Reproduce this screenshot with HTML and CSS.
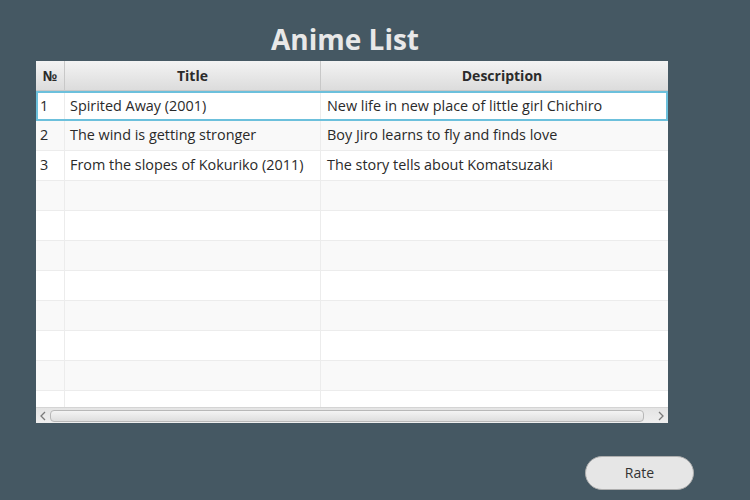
FILE: index.html
```html
<!DOCTYPE html>
<html>
<head>
<meta charset="utf-8">
<link rel="stylesheet" href="styles.css">
</head>
<body>
<div class="page">
  <h1 class="title">Anime List</h1>
  <div class="table">
    <div class="row head">
      <div class="cell c-no">№</div>
      <div class="cell c-title">Title</div>
      <div class="cell c-desc">Description</div>
    </div>
    <div class="body">
      <div class="row selected">
        <div class="cell c-no">1</div>
        <div class="cell c-title">Spirited Away (2001)</div>
        <div class="cell c-desc">New life in new place of little girl Chichiro</div>
      </div>
      <div class="row odd">
        <div class="cell c-no">2</div>
        <div class="cell c-title">The wind is getting stronger</div>
        <div class="cell c-desc">Boy Jiro learns to fly and finds love</div>
      </div>
      <div class="row">
        <div class="cell c-no">3</div>
        <div class="cell c-title">From the slopes of Kokuriko (2011)</div>
        <div class="cell c-desc">The story tells about Komatsuzaki</div>
      </div>
      <div class="row odd"><div class="cell c-no"></div><div class="cell c-title"></div><div class="cell c-desc"></div></div>
      <div class="row"><div class="cell c-no"></div><div class="cell c-title"></div><div class="cell c-desc"></div></div>
      <div class="row odd"><div class="cell c-no"></div><div class="cell c-title"></div><div class="cell c-desc"></div></div>
      <div class="row"><div class="cell c-no"></div><div class="cell c-title"></div><div class="cell c-desc"></div></div>
      <div class="row odd"><div class="cell c-no"></div><div class="cell c-title"></div><div class="cell c-desc"></div></div>
      <div class="row"><div class="cell c-no"></div><div class="cell c-title"></div><div class="cell c-desc"></div></div>
      <div class="row odd"><div class="cell c-no"></div><div class="cell c-title"></div><div class="cell c-desc"></div></div>
      <div class="row"><div class="cell c-no"></div><div class="cell c-title"></div><div class="cell c-desc"></div></div>
    </div>
    <div class="scrollbar">
      <div class="arrow">
        <svg width="8" height="10" viewBox="0 0 8 10"><path d="M6 1 L2 5 L6 9" fill="none" stroke="#7a7a7a" stroke-width="1.3"/></svg>
      </div>
      <div class="track"><div class="thumb"></div></div>
      <div class="arrow">
        <svg width="8" height="10" viewBox="0 0 8 10"><path d="M2 1 L6 5 L2 9" fill="none" stroke="#7a7a7a" stroke-width="1.3"/></svg>
      </div>
    </div>
  </div>
  <div class="actions">
    <button class="btn">Rate</button>
  </div>
</div>
</body>
</html>
```
FILE: styles.css
```css
html, body {
  margin: 0;
  padding: 0;
  background: #455863;
  width: 750px;
  height: 500px;
  overflow: hidden;
  font-family: "Open Sans", "Noto Sans", sans-serif;
}
.page {
  display: flex;
  flex-direction: column;
  padding: 0 0 0 36px;
}
.title {
  margin: 19px 0 2px 0;
  width: 618px;
  text-align: center;
  font-size: 28px;
  line-height: 40px;
  font-weight: 700;
  color: #e8e8e8;
}
.table {
  width: 632px;
  height: 362px;
  background: #ffffff;
  display: flex;
  flex-direction: column;
  overflow: hidden;
}
.row {
  display: flex;
  height: 30px;
  flex: none;
  box-sizing: border-box;
  background: #ffffff;
  position: relative;
}
.row.odd {
  background: #f9f9f9;
}
.row.head {
  background: linear-gradient(#f3f3f3, #dcdcdc);
  border-bottom: 1px solid #c8c8c8;
  height: 30px;
}
.row.head .cell {
  font-size: 14px;
  font-weight: 700;
  justify-content: center;
  color: #2b2b2b;
  border-right: 1px solid #c8c8c8;
  padding: 0 0 1px 0;
  border-bottom: none;
}
.body {
  flex: 1;
  overflow: hidden;
  display: flex;
  flex-direction: column;
}
.cell {
  display: flex;
  align-items: center;
  flex: none;
  box-sizing: border-box;
  font-size: 14.4px;
  color: #2a2a2a;
  padding: 0 0 2px 5px;
  border-right: 1px solid #ececec;
  border-bottom: 1px solid #ececec;
  white-space: nowrap;
  overflow: hidden;
}
.c-no { width: 29px; padding-left: 4px; }
.c-title { width: 256px; }
.c-desc { width: 362px; border-right: none; padding-left: 6px; }
.row.head .c-desc { border-right: none; }
.row.selected .cell {
  border-bottom: none;
}
.row.selected::after {
  content: "";
  position: absolute;
  left: 0;
  top: 0;
  width: 632px;
  height: 30px;
  box-sizing: border-box;
  border: 2px solid #6cc0dc;
  pointer-events: none;
}
.scrollbar {
  flex: none;
  height: 16px;
  display: flex;
  align-items: center;
  background: linear-gradient(#e4e4e4, #efefef);
  border-top: 1px solid #d4d4d4;
  box-sizing: border-box;
}
.arrow {
  width: 14px;
  height: 16px;
  display: flex;
  align-items: center;
  justify-content: center;
  flex: none;
}
.track {
  flex: 1;
  padding: 0 10px 0 0;
  display: flex;
  align-items: center;
}
.thumb {
  width: 594px;
  height: 12px;
  box-sizing: border-box;
  border: 1px solid #b8b8b8;
  border-radius: 4px;
  background: linear-gradient(#f4f4f4, #dedede);
}
.actions {
  display: flex;
  justify-content: flex-end;
  width: 658px;
  margin-top: 33px;
}
.btn {
  width: 109px;
  height: 34px;
  border-radius: 17px;
  border: 1px solid #aeaeae;
  background: #e6e6e6;
  font-family: "Open Sans", "Noto Sans", sans-serif;
  font-size: 14px;
  color: #333333;
  padding: 0 0 1px 0;
}
```
